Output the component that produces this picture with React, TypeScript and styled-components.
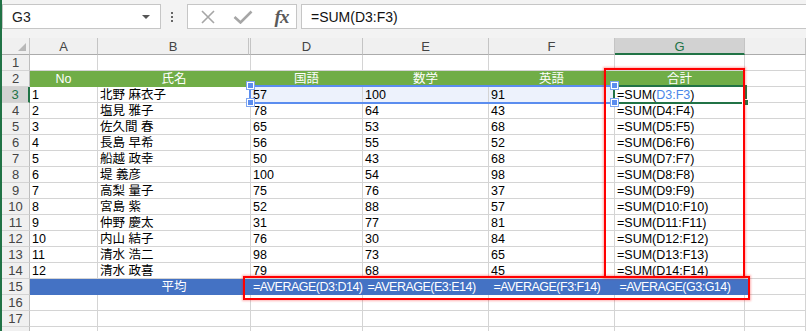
import * as React from 'react';
import styled, { createGlobalStyle } from 'styled-components';

type Fill = 'none' | 'green' | 'blue' | 'range';

interface CellSpec {
  text?: React.ReactNode;
  fill?: Fill;
  align?: 'left' | 'center';
  tight?: boolean;
}

const FONT = `"Liberation Sans", "Noto Sans CJK JP", sans-serif`;
const GRID = '#d4d4d4';
const EXCEL_GREEN = '#217346';

// A, B(+hidden C), D, E, F, G
const COLS = [68, 153, 112, 126, 126, 130];
const HEADER_COLS: { label: string; w: number; selected?: boolean }[] = [
  { label: 'A', w: 68 },
  { label: 'B', w: 151 },
  { label: '', w: 2 },
  { label: 'D', w: 112 },
  { label: 'E', w: 126 },
  { label: 'F', w: 126 },
  { label: 'G', w: 130, selected: true },
];

const students: [string, number, number, number][] = [
  ['北野 麻衣子', 57, 100, 91],
  ['塩見 雅子', 78, 64, 43],
  ['佐久間 春', 65, 53, 68],
  ['長島 早希', 56, 55, 52],
  ['船越 政幸', 50, 43, 68],
  ['堤 義彦', 100, 54, 98],
  ['高梨 量子', 75, 76, 37],
  ['宮島 紫', 52, 88, 57],
  ['仲野 慶太', 31, 77, 81],
  ['内山 結子', 76, 30, 84],
  ['清水 浩二', 98, 73, 65],
  ['清水 政喜', 79, 68, 45],
];

const GlobalStyle = createGlobalStyle`
  html, body {
    margin: 0;
    padding: 0;
    background: #fff;
  }
  body {
    font-family: ${FONT};
  }
`;

const Window = styled.div`
  position: relative;
  width: 806px;
  height: 331px;
  box-sizing: border-box;
  border-left: 2px solid ${EXCEL_GREEN};
  overflow: hidden;
  background: #fff;
`;

const Toolbar = styled.div`
  display: flex;
  align-items: flex-start;
  height: 38px;
  box-sizing: border-box;
  padding-top: 4px;
  background: #f3f3f3;
`;

const NameBox = styled.div`
  display: flex;
  align-items: center;
  width: 159px;
  height: 25px;
  box-sizing: border-box;
  padding-left: 9px;
  border: 1px solid #c6c6c6;
  background: #fff;
  font-size: 14px;
  color: #222;
`;

const DropArrow = styled.span`
  margin-left: auto;
  margin-right: 10px;
  width: 0;
  height: 0;
  border-left: 4px solid transparent;
  border-right: 4px solid transparent;
  border-top: 4px solid #555;
`;

const Dots = styled.div`
  display: flex;
  flex-direction: column;
  align-items: center;
  gap: 2px;
  width: 22px;
  padding-top: 8px;
`;

const Dot = styled.span`
  width: 2px;
  height: 2px;
  background: #666;
`;

const FuncBox = styled.div`
  display: flex;
  align-items: center;
  width: 110px;
  height: 25px;
  box-sizing: border-box;
  margin-left: 4px;
  padding-left: 2px;
  border: 1px solid #c6c6c6;
  background: #fff;
`;

const FuncSlot = styled.div`
  display: flex;
  align-items: center;
  justify-content: center;
  width: 35px;
  height: 100%;
`;

const FxText = styled.span`
  font-family: "Liberation Serif", "DejaVu Serif", serif;
  font-style: italic;
  font-weight: bold;
  font-size: 19px;
  color: #5a5a5a;
  letter-spacing: -1px;
  margin-left: 8px;
`;

const FormulaInput = styled.div`
  flex: 1 1 auto;
  display: flex;
  align-items: center;
  height: 25px;
  box-sizing: border-box;
  margin-left: 4px;
  padding-left: 9px;
  border: 1px solid #c6c6c6;
  border-right: none;
  background: #fff;
  font-size: 14px;
  color: #111;
`;

const Row = styled.div`
  display: flex;
`;

const ColHead = styled.div<{ $w?: number; $selected?: boolean }>`
  flex: ${(p) => (p.$w ? `0 0 ${p.$w}px` : '1 1 auto')};
  display: flex;
  align-items: center;
  justify-content: center;
  height: 17px;
  box-sizing: border-box;
  border-right: 1px solid #c4c4c4;
  border-bottom: ${(p) => (p.$selected ? `2px solid ${EXCEL_GREEN}` : '1px solid #ababab')};
  background: ${(p) => (p.$selected ? '#d2d2d2' : '#f0f0f0')};
  color: ${(p) => (p.$selected ? EXCEL_GREEN : '#444')};
  font-size: 13px;
  padding-top: 1px;
`;

const Corner = styled.div`
  flex: 0 0 28px;
  display: flex;
  align-items: flex-end;
  justify-content: flex-end;
  height: 17px;
  box-sizing: border-box;
  padding: 0 3px 3px 0;
  border-right: 1px solid #c4c4c4;
  border-bottom: 1px solid #ababab;
  background: #f0f0f0;
`;

const RowHead = styled.div<{ $selected?: boolean }>`
  flex: 0 0 28px;
  display: flex;
  align-items: flex-end;
  justify-content: center;
  height: 16px;
  box-sizing: border-box;
  border-bottom: 1px solid ${GRID};
  border-right: ${(p) => (p.$selected ? `2px solid ${EXCEL_GREEN}` : '1px solid #bdbdbd')};
  background: ${(p) => (p.$selected ? '#d2d2d2' : '#f0f0f0')};
  color: ${(p) => (p.$selected ? EXCEL_GREEN : '#444')};
  font-size: 13px;
  line-height: 14px;
`;

const fillColor = (f?: Fill) =>
  f === 'green' ? '#70ad47' : f === 'blue' ? '#4472c4' : f === 'range' ? '#edf2fc' : '#fff';

const Cell = styled.div<{ $w?: number; $fill?: Fill; $align?: 'left' | 'center'; $tight?: boolean }>`
  flex: ${(p) => (p.$w ? `0 0 ${p.$w}px` : '1 1 auto')};
  display: flex;
  align-items: flex-end;
  justify-content: ${(p) => (p.$align === 'center' ? 'center' : 'flex-start')};
  height: 16px;
  box-sizing: border-box;
  padding: 0 2px;
  white-space: nowrap;
  overflow: visible;
  background: ${(p) => fillColor(p.$fill)};
  border-right: 1px solid
    ${(p) => (p.$fill === 'green' || p.$fill === 'blue' ? fillColor(p.$fill) : GRID)};
  border-bottom: 1px solid
    ${(p) => (p.$fill === 'green' || p.$fill === 'blue' ? fillColor(p.$fill) : GRID)};
  color: ${(p) => (p.$fill === 'green' || p.$fill === 'blue' ? '#fff' : '#000')};
  font-size: 12.5px;
  line-height: 14px;
  letter-spacing: ${(p) => (p.$tight ? '-0.5px' : '0')};
`;

const Ref = styled.span`
  color: #4a86e8;
`;

const Overlay = styled.div<{ $x: number; $y: number; $w: number; $h: number }>`
  position: absolute;
  left: ${(p) => p.$x}px;
  top: ${(p) => p.$y}px;
  width: ${(p) => p.$w}px;
  height: ${(p) => p.$h}px;
  box-sizing: border-box;
  pointer-events: none;
`;

const RangeBorder = styled(Overlay)`
  border-top: 2px solid #5b8def;
  border-bottom: 2px solid #5b8def;
  border-left: 2px solid #5b8def;
`;

const ActiveBorder = styled(Overlay)`
  border: 2px solid ${EXCEL_GREEN};
`;

const Handle = styled(Overlay)`
  background: #5b8def;
  border: 1px solid #fff;
  outline: 1px solid #7ea5f0;
`;

const FillHandle = styled(Overlay)`
  background: ${EXCEL_GREEN};
  border: 1px solid #fff;
`;

const RedBox = styled(Overlay)`
  border: 2px solid #ff0000;
  box-shadow: 0 0 2px 1px rgba(255, 0, 0, 0.3);
`;

const blank = (): CellSpec[] => COLS.map(() => ({}));

const rows: { n: number; label: string; cells: CellSpec[] }[] = [];
rows.push({ n: 1, label: '1', cells: blank() });
rows.push({
  n: 2,
  label: '2',
  cells: ['No', '氏名', '国語', '数学', '英語', '合計'].map((t) => ({
    text: t,
    fill: 'green' as Fill,
    align: 'center' as const,
  })),
});
students.forEach(([name, d, e, f], i) => {
  const r = i + 3;
  const sel = r === 3;
  const fill: Fill = sel ? 'range' : 'none';
  rows.push({
    n: r,
    label: String(r),
    cells: [
      { text: i + 1 },
      { text: name },
      { text: d, fill },
      { text: e, fill },
      { text: f, fill },
      {
        text: sel ? (
          <>
            =SUM(<Ref>D3:F3</Ref>)
          </>
        ) : (
          `=SUM(D${r}:F${r})`
        ),
      },
    ],
  });
});
rows.push({
  n: 15,
  label: '15',
  cells: [
    { fill: 'blue' },
    { text: '平均', fill: 'blue', align: 'center' },
    ...['D', 'E', 'F', 'G'].map((c) => ({
      text: `=AVERAGE(${c}3:${c}14)`,
      fill: 'blue' as Fill,
      tight: true,
    })),
  ],
});
rows.push({ n: 16, label: '16', cells: blank() });
rows.push({ n: 17, label: '17', cells: blank() });
// row 18 only peeks in at the bottom edge
rows.push({ n: 18, label: '', cells: blank() });

const CancelIcon = () => (
  <svg width="16" height="16" viewBox="0 0 16 16">
    <path d="M2 2 L14 14 M14 2 L2 14" stroke="#a6a6a6" strokeWidth="1.6" fill="none" />
  </svg>
);

const CheckIcon = () => (
  <svg width="20" height="14" viewBox="0 0 20 14">
    <path d="M1.5 7 L7.5 12.5 L18.5 1.5" stroke="#a6a6a6" strokeWidth="2.6" fill="none" />
  </svg>
);

const SelectAllMark = () => (
  <svg width="8" height="8" viewBox="0 0 8 8">
    <polygon points="8,0 8,8 0,8" fill="#b8b8b8" />
  </svg>
);

const App: React.FC = () => (
  <>
    <GlobalStyle />
    <Window>
      <Toolbar>
        <NameBox>
          G3
          <DropArrow />
        </NameBox>
        <Dots>
          <Dot />
          <Dot />
          <Dot />
        </Dots>
        <FuncBox>
          <FuncSlot>
            <CancelIcon />
          </FuncSlot>
          <FuncSlot>
            <CheckIcon />
          </FuncSlot>
          <FuncSlot>
            <FxText>fx</FxText>
          </FuncSlot>
        </FuncBox>
        <FormulaInput>=SUM(D3:F3)</FormulaInput>
      </Toolbar>

      <Row>
        <Corner>
          <SelectAllMark />
        </Corner>
        {HEADER_COLS.map((c, i) => (
          <ColHead key={i} $w={c.w} $selected={c.selected}>
            {c.label}
          </ColHead>
        ))}
        <ColHead />
      </Row>

      {rows.map((row) => (
        <Row key={row.n}>
          <RowHead $selected={row.n === 3}>{row.label}</RowHead>
          {row.cells.map((c, i) => (
            <Cell key={i} $w={COLS[i]} $fill={c.fill} $align={c.align} $tight={c.tight}>
              {c.text}
            </Cell>
          ))}
          <Cell />
        </Row>
      ))}

      <RangeBorder $x={247} $y={85} $w={366} $h={19} />
      <ActiveBorder $x={611} $y={85} $w={134} $h={19} />
      <Handle $x={245} $y={82} $w={7} $h={7} />
      <Handle $x={245} $y={99} $w={7} $h={7} />
      <Handle $x={609} $y={82} $w={7} $h={7} />
      <Handle $x={609} $y={99} $w={7} $h={7} />
      <FillHandle $x={740} $y={99} $w={7} $h={7} />

      <RedBox $x={602} $y={68} $w={141} $h={210} />
      <RedBox $x={241} $y={276} $w={507} $h={24} />
    </Window>
  </>
);

export default App;
